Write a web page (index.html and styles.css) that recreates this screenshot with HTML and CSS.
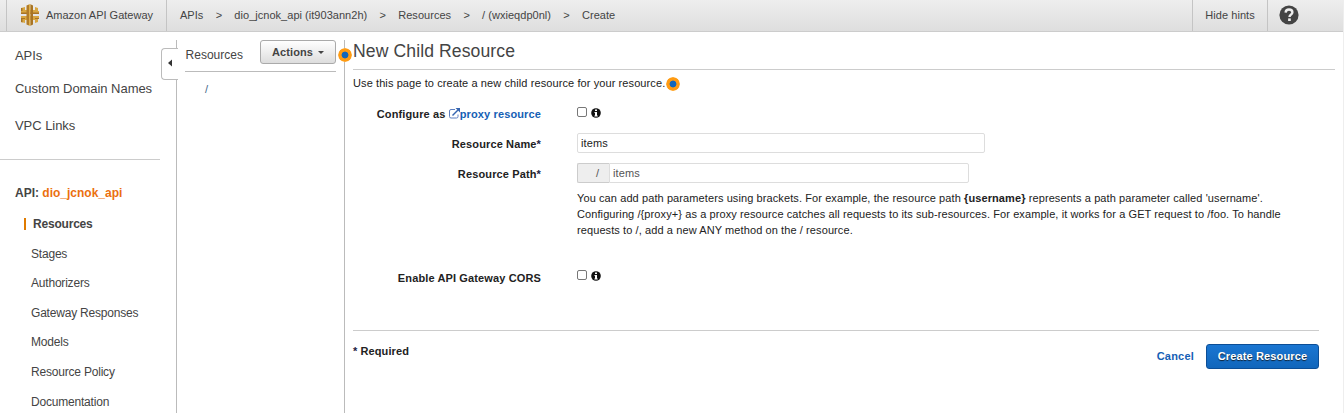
FILE: index.html
```html
<!DOCTYPE html>
<html lang="en">
<head>
<meta charset="utf-8">
<title>Amazon API Gateway</title>
<link rel="stylesheet" href="styles.css">
</head>
<body>
<div class="app">
<header class="topbar">
  <div class="brand">
    <svg class="logo" width="20" height="22" viewBox="0 0 20 22">
      <path fill="#d9a741" d="M1 4l4-1v3h10V3l3 1v3h1v3H1zM1 12h18v3h-1v3l-3 1v-3H5v3l-4-1z"/>
      <path fill="#a87424" d="M1 8.500h18V10H1zM1 14h4v1H1zM15 14h4v1h-4zM1 4h1.500v3H1zM1 15h1.500v3.400L1 18z"/>
      <path fill="#b27c28" d="M6.500 1.500L9 .5v21l-2.500-1z"/>
      <path fill="#e0b04b" d="M9 .3h1.500v21.400H9z"/>
      <path fill="#a87424" d="M10.500.3L13 1.500v19l-2.500 1.200z"/>
    </svg>
    <span class="brand-name">Amazon API Gateway</span>
  </div>
  <nav class="crumbs">
    <span>APIs</span><i>&gt;</i><span>dio_jcnok_api (it903ann2h)</span><i>&gt;</i><span>Resources</span><i>&gt;</i><span>/ (wxieqdp0nl)</span><i>&gt;</i><span>Create</span>
  </nav>
  <div class="hints">Hide hints</div>
  <div class="help">
    <svg width="20" height="20" viewBox="0 0 20 20"><circle cx="10" cy="10" r="9.600" fill="#444"/><path d="M6.600 7.600C6.800 5.300 8.200 4.500 10 4.500c2 0 3.400 1.100 3.400 2.800 0 2.300-2.900 2.400-2.900 4.700" fill="none" stroke="#eee" stroke-width="2.400"/><path d="M9.100 13.400h2.700V16H9.100z" fill="#eee"/></svg>
  </div>
</header>
<div class="body">
  <aside class="sidebar">
    <ul class="main-nav"><li>APIs</li><li>Custom Domain Names</li><li>VPC Links</li></ul>
    <div class="api-name">API: <b>dio_jcnok_api</b></div>
    <ul class="sub-nav"><li class="active">Resources</li><li>Stages</li><li>Authorizers</li><li>Gateway Responses</li><li>Models</li><li>Resource Policy</li><li>Documentation</li></ul>
  </aside>
  <section class="tree">
    <div class="collapse"><svg width="5" height="8" viewBox="0 0 5 8"><path d="M0 4l4-3.500v7z" fill="#333"/></svg></div>
    <div class="tree-head"><span class="tree-title">Resources</span><button class="actions">Actions<span class="caret"></span></button></div>
    <div class="root">/</div>
  </section>
  <main class="content">
    <span class="dot title-dot"></span>
    <h1>New Child Resource</h1>
    <p class="intro"><span>Use this page to create a new child resource for your resource.</span><span class="dot"></span></p>
    <div class="row proxy">
      <label>Configure as <a><svg width="11" height="11" viewBox="0 0 11 11"><path d="M6 1.500H2Q.5 1.500.5 3v5.500Q.5 10 2 10h5.500Q9 10 9 8.500V6.500" fill="none" stroke="#5d7fc0"/><path d="M3.500 7.500L9 2" stroke="#3565b0" stroke-width="1.500"/><path d="M6.500 0H11v4.500z" fill="#3565b0"/></svg>proxy resource</a></label>
      <div class="checks"><span class="box"></span><svg class="info" width="10" height="10" viewBox="0 0 10 10"><circle cx="5" cy="5" r="4.800" fill="#111"/><path d="M4 1.500h2V3H4zM3.500 4H6v3.500h.7v1H3.400v-1H4V5h-.5z" fill="#fff"/></svg></div>
    </div>
    <div class="row"><label>Resource Name<em>*</em></label><div class="input name">items</div></div>
    <div class="row path-row"><label>Resource Path<em>*</em></label><div class="path"><span class="prefix">/</span><div class="input path-input">items</div></div></div>
    <div class="desc"><div>You can add path parameters using brackets. For example, the resource path <b>{username}</b> represents a path parameter called 'username'.</div><div>Configuring /{proxy+} as a proxy resource catches all requests to its sub-resources. For example, it works for a GET request to /foo. To handle</div><div>requests to /, add a new ANY method on the / resource.</div></div>
    <div class="row cors"><label>Enable API Gateway CORS</label>
      <div class="checks"><span class="box"></span><svg class="info" width="10" height="10" viewBox="0 0 10 10"><circle cx="5" cy="5" r="4.800" fill="#111"/><path d="M4 1.500h2V3H4zM3.500 4H6v3.500h.7v1H3.400v-1H4V5h-.5z" fill="#fff"/></svg></div>
    </div>
    <footer class="foot"><span class="required"><em>*</em> Required</span><a class="cancel">Cancel</a><button class="create">Create Resource</button></footer>
  </main>
</div>
</div>
</body>
</html>
```
FILE: styles.css
```css
* { box-sizing: border-box; }
body { margin: 0; background: #fff; color: #222; font: 11px/16px "Liberation Sans", Arial, sans-serif; overflow: hidden; }
.app { width: 1344px; height: 413px; border-right: 1px solid #eee; }
ul { list-style: none; margin: 0; padding: 0; }
em, i { font-style: normal; }
.topbar { display: flex; height: 32px; background: linear-gradient(#eeeeee, #dedede); border-bottom: 1px solid #ccc; color: #444; line-height: 31px; }
.brand { display: flex; align-items: center; margin-left: 6px; width: 161px; border: solid #c4c4c4; border-width: 0 1px; padding-left: 13px; gap: 6px; white-space: nowrap; }
.logo { margin-top: -2px; }
.crumbs { display: flex; flex: 1; padding-left: 13px; white-space: nowrap; letter-spacing: .03px; }
.crumbs i { width: 31px; text-align: center; }
.hints { width: 76px; border: solid #c4c4c4; border-width: 0 1px; text-align: center; letter-spacing: .06px; }
.help { width: 75px; padding: 5px 0 0 11px; line-height: 0; }
.body { display: flex; height: 381px; }
.sidebar { width: 176px; color: #444; }
.main-nav { width: 160px; height: 128px; border-bottom: 1px solid #ccc; padding: 6px 0 0 15px; font-size: 13px; letter-spacing: -.05px; }
.main-nav li { height: 37px; line-height: 36px; }
.main-nav li:first-child { height: 33px; }
.api-name { font-size: 12px; font-weight: bold; padding: 25px 0 0 15px; }
.api-name b { color: #eb700f; }
.sub-nav { padding: 8px 0 0 31px; font-size: 12px; letter-spacing: -.2px; }
.sub-nav li { height: 29.6px; line-height: 30px; white-space: nowrap; }
.sub-nav .active { font-weight: bold; margin-left: -7px; display: flex; align-items: center; gap: 7px; }
.active::before { content: ""; width: 2px; height: 12px; background: #e07b00; }
.tree { position: relative; width: 168px; margin-top: 8px; border-left: 1px solid #bbb; padding: 0 8px; color: #444; }
.collapse { position: absolute; left: -16px; top: 8px; width: 17px; height: 32px; border: 1px solid #bbb; border-right: 0; border-radius: 4px 0 0 4px; background: #fff; display: flex; align-items: center; padding: 0 0 2px 6px; }
.tree-head { display: flex; justify-content: space-between; height: 32px; border-bottom: 1px solid #bbb; }
.tree-title { font-size: 12px; line-height: 30px; padding-left: .6px; }
.actions { width: 76px; height: 24px; border: 1px solid #aaa; border-radius: 3px; background: linear-gradient(#fff, #ddd); font: bold 11px/20px "Liberation Sans", Arial, sans-serif; letter-spacing: .1px; color: #444; display: flex; align-items: center; justify-content: center; gap: 5px; padding: 0; }
.caret { border: 3px solid transparent; border-top-color: #444; border-bottom: 0; }
.root { padding: 9px 0 0 20px; color: #468; }
.content { position: relative; width: 999px; margin-top: 8px; border-left: 1px solid #bbb; padding: 0 24px 0 8px; letter-spacing: .095px; }
.dot { display: inline-block; width: 14px; height: 14px; border-radius: 50%; background: radial-gradient(circle, #1166bb 0 3px, #ff9b12 3.8px 6.4px, #ffd9a0 7px); }
.title-dot { position: absolute; left: -7px; top: 8px; }
h1 { margin: 0 -16px 0 0; height: 30px; border-bottom: 1px solid #ccc; font-weight: normal; font-size: 17.6px; line-height: 22px; color: #444; }
.intro { margin: 5px 0 0; height: 17px; display: flex; }
.intro .dot { margin: 2px 0 0 1px; }
.row { display: flex; height: 30px; }
.row label { width: 188px; text-align: right; font-weight: bold; line-height: 22px; letter-spacing: .13px; }
.proxy { margin-top: 13px; height: 28px; }
a { color: #1560b5; font-weight: bold; }
label svg { vertical-align: -1px; }
em { color: #224; }
.checks { display: flex; padding: 2px 0 0 36px; gap: 4px; }
.box { width: 10px; height: 10px; border: 1px solid #777; border-radius: 2px; }
.info { margin-top: 1px; }
.input { height: 20px; border: 1px solid #ddd; border-radius: 2px; padding-left: 3px; line-height: 18px; }
.name { margin-left: 36px; width: 408px; }
.path { margin-left: 36px; width: 392px; height: 20px; display: flex; }
.prefix { width: 32px; border: 1px solid #ccc; border-right: 0; border-radius: 2px 0 0 2px; background: #eee; padding-left: 18px; line-height: 18px; color: #555; }
.path-input { flex: 1; color: #555; border-radius: 0 2px 2px 0; }
.desc { margin: -3px 0 0 224px; height: 78px; white-space: nowrap; }
.cors { height: 62px; }
.proxy label { line-height: 19px; }
.cors label { line-height: 21px; }
.foot { border-top: 1px solid #ccc; display: flex; padding-top: 13px; }
.required { flex: 1; font-weight: bold; line-height: 15px; }
.cancel { line-height: 25px; margin-right: 12px; letter-spacing: .2px; }
.create { width: 113px; height: 25px; padding: 0 0 2px; border: 1px solid #0c4e96; border-radius: 3px; background: linear-gradient(#1a76d2, #1166bb); color: #fff; text-shadow: 0 1px 1px #123; font: bold 11px/20px "Liberation Sans", Arial, sans-serif; letter-spacing: .13px; }
```
